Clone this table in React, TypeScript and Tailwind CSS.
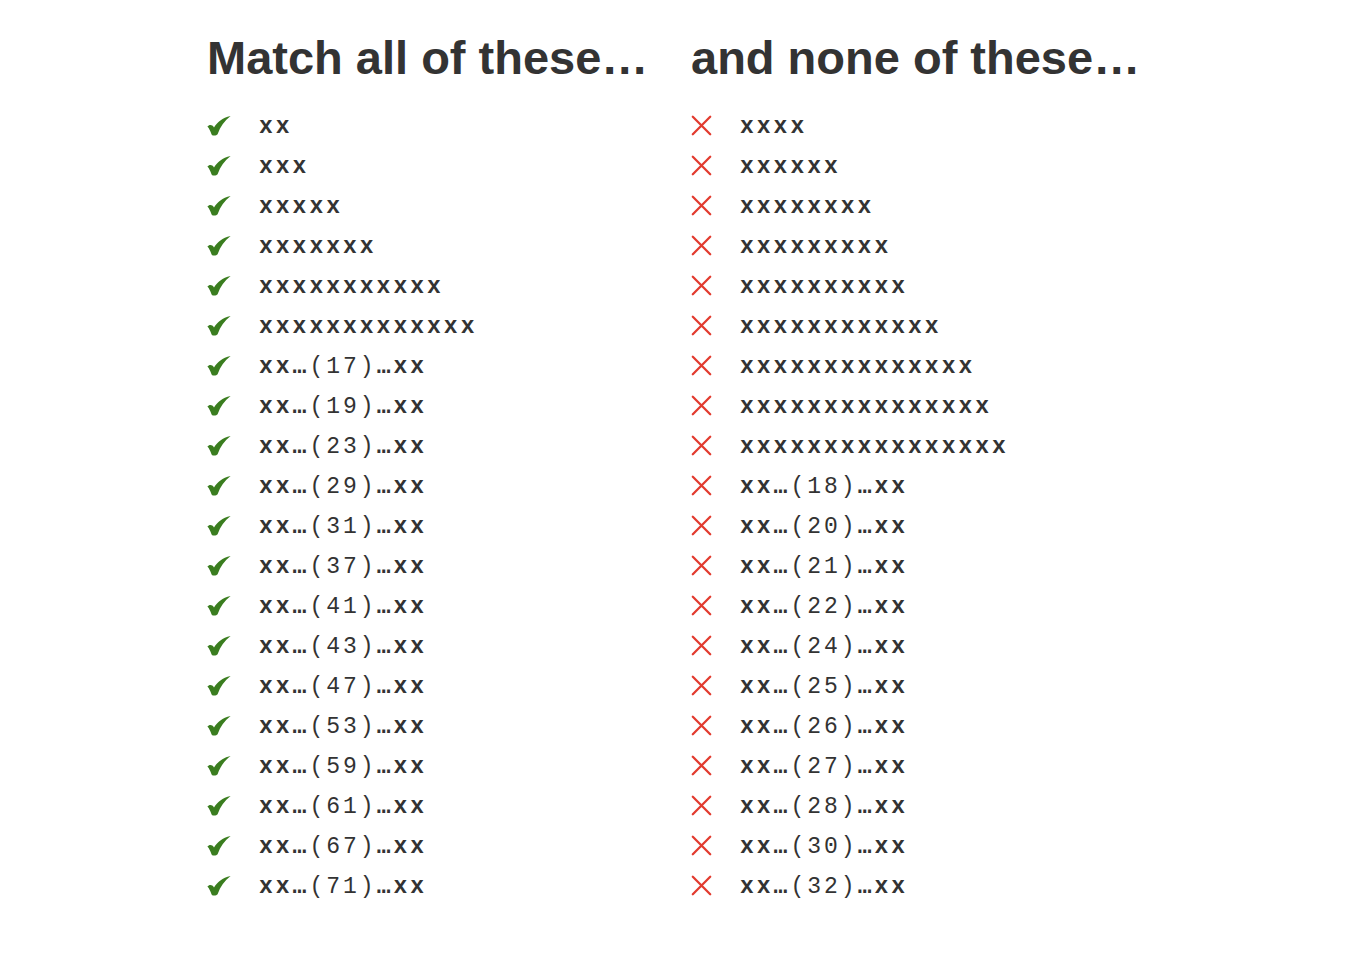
import React from 'react';

const matches = ['xx', 'xxx', 'xxxxx', 'xxxxxxx', 'x'.repeat(11), 'x'.repeat(13), 17, 19, 23, 29, 31, 37, 41, 43, 47, 53, 59, 61, 67, 71];
const misses = ['xxxx', 'xxxxxx', 'x'.repeat(8), 'x'.repeat(9), 'x'.repeat(10), 'x'.repeat(12), 'x'.repeat(14), 'x'.repeat(15), 'x'.repeat(16), 18, 20, 21, 22, 24, 25, 26, 27, 28, 30, 32];

const Check = () => (
  <svg width="24" height="20" viewBox="0 0 24 20" className="shrink-0 -mt-[3px]">
    <path
      d="M0.4 10.6 C2.2 8.2 5.2 8.4 7 11.4 C10.4 6.2 15.2 1.8 23.6 0 C17.6 4.4 13.2 10.6 10.6 18.2 C9.2 20 5.6 20 4.6 18.4 C3.4 15.4 2.2 12.4 0.4 10.6 Z"
      fill="#3a7d1f"
    />
  </svg>
);

const Cross = () => (
  <svg width="21" height="21" viewBox="0 0 21 21" className="shrink-0 -mt-[3px]">
    <path d="M1.8 1.8 L19.2 19.2 M19.2 1.8 L1.8 19.2" stroke="#e23b2f" strokeWidth="2.3" strokeLinecap="round" />
  </svg>
);

const Word = ({ value }: { value: string | number }) => {
  if (typeof value === 'string') {
    return <span className="font-bold">{value}</span>;
  }
  return (
    <span>
      <span className="font-bold">xx…</span>
      <span className="font-normal">({value})</span>
      <span className="font-bold">…xx</span>
    </span>
  );
};

const Column = ({ title, items, good }: { title: string; items: (string | number)[]; good: boolean }) => (
  <div className={good ? 'w-[484px] shrink-0' : 'shrink-0'}>
    <h2 className="text-[47px] font-bold leading-[56px] text-[#333]" style={{ fontFamily: '"Liberation Sans", Arial, sans-serif' }}>
      {title}
    </h2>
    <ul className="mt-[21px]">
      {items.map((it, i) => (
        <li key={i} className="flex items-center h-[40px]">
          <div className={good ? 'w-[52px] flex' : 'w-[49px] flex'}>{good ? <Check /> : <Cross />}</div>
          <div
            className="text-[23px] text-[#333] tracking-[3px] whitespace-nowrap"
            style={{ fontFamily: '"Liberation Mono", "Courier New", monospace' }}
          >
            <Word value={it} />
          </div>
        </li>
      ))}
    </ul>
  </div>
);

export default function App() {
  return (
    <div className="min-h-[970px] bg-white pt-[30px]">
      <div className="flex pl-[207px]">
        <Column title="Match all of these…" items={matches} good />
        <Column title="and none of these…" items={misses} good={false} />
      </div>
    </div>
  );
}
